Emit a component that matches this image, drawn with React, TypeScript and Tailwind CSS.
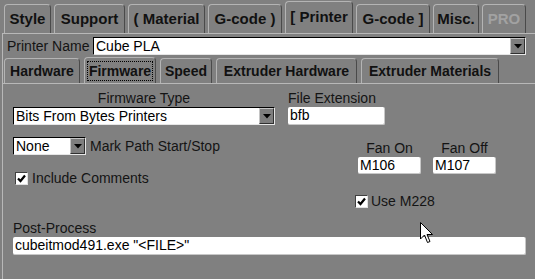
import React from "react";

const topTabs = [
  { label: "Style", w: "w-[47px]" },
  { label: "Support", w: "w-[71px]" },
  { label: "( Material", w: "w-[77px]" },
  { label: "G-code )", w: "w-[74px]" },
  { label: "[ Printer", w: "w-[68px]", active: true },
  { label: "G-code ]", w: "w-[74px]" },
  { label: "Misc.", w: "w-[46px]" },
  { label: "PRO", w: "w-[44px]", disabled: true },
];

const subTabs = [
  { label: "Hardware", w: "w-[76px]" },
  { label: "Firmware", w: "w-[72px]", active: true },
  { label: "Speed", w: "w-[52px]" },
  { label: "Extruder Hardware", w: "w-[141px]" },
  { label: "Extruder Materials", w: "w-[138px]" },
];

function DropButton() {
  return (
    <div className="w-[15px] h-full bg-[#7e7e7e] border border-t-[#c4c4c4] border-l-[#c4c4c4] border-b-[#303030] border-r-[#303030] flex items-center justify-center">
      <svg width="8" height="5" viewBox="0 0 8 5">
        <path d="M0 0 H8 L4 4.5 Z" fill="#000" />
      </svg>
    </div>
  );
}

function Select({ value, className }: { value: string; className: string }) {
  return (
    <div
      className={`flex items-stretch bg-white border border-t-black border-l-black border-b-[#e6e6e6] border-r-[#e6e6e6] ${className}`}
    >
      <span className="flex-1 pl-[2px] leading-[16px] text-[14px] text-black truncate">
        {value}
      </span>
      <DropButton />
    </div>
  );
}

function TextBox({ value, className }: { value: string; className: string }) {
  return (
    <div
      className={`bg-white border-b border-r border-[#c8c8c8] rounded-[2px] pl-[2px] text-[14px] leading-[17px] text-black ${className}`}
    >
      {value}
    </div>
  );
}

function CheckBox() {
  return (
    <div className="w-[13px] h-[13px] bg-white border border-t-[#404040] border-l-[#404040] border-b-[#e0e0e0] border-r-[#e0e0e0] flex items-center justify-center">
      <svg width="9" height="9" viewBox="0 0 9 9">
        <path d="M1 4.5 L3.5 7 L8 1.5" stroke="#000" strokeWidth="2.2" fill="none" />
      </svg>
    </div>
  );
}

export default function App() {
  return (
    <div className="relative w-[535px] h-[279px] bg-[#808080] overflow-hidden font-['Liberation_Sans',Arial,sans-serif] text-[#141414] flex flex-col">
      {/* top tabs */}
      <div className="flex items-end gap-[3px] pl-[4px] h-[33px] shrink-0">
        {topTabs.map((t) => (
          <div
            key={t.label}
            className={`${t.w} ${
              t.active ? "h-[32px]" : "h-[29px]"
            } border border-b-0 border-t-[#b4b4b4] border-l-[#b4b4b4] border-r-[#4a4a4a] rounded-t-[4px] flex items-center justify-center text-[15px] font-bold whitespace-nowrap ${
              t.disabled ? "text-[#a2a2a2]" : "text-[#111]"
            }`}
          >
            {t.label}
          </div>
        ))}
      </div>

      {/* outer panel */}
      <div className="ml-[2px] flex-1 border-t border-l border-[#b8b8b8] flex flex-col">
        <div className="flex items-center h-[18px] mt-[3px]">
          <span className="w-[90px] pl-[4px] text-[14px] leading-[16px]">Printer Name</span>
          <Select value="Cube PLA" className="w-[433px] h-[18px]" />
        </div>

        <div className="flex items-end gap-[4px] pl-[1px] h-[26px] mt-[2px]">
          {subTabs.map((t) => (
            <div
              key={t.label}
              className={`${t.w} ${
                t.active ? "h-[26px]" : "h-[25px]"
              } border border-b-0 border-t-[#b4b4b4] border-l-[#b4b4b4] border-r-[#4a4a4a] rounded-t-[4px] flex items-center justify-center text-[14px] font-bold text-[#111] whitespace-nowrap`}
            >
              {t.active ? (
                <span className="border border-dotted border-black px-[1px] leading-[18px]">
                  {t.label}
                </span>
              ) : (
                t.label
              )}
            </div>
          ))}
        </div>

        {/* firmware content */}
        <div className="flex-1 border-t border-[#b8b8b8] flex flex-col text-[14px] leading-[16px]">
          <div className="flex gap-[13px] pl-[10px] pt-[6px]">
            <div className="w-[262px] flex flex-col">
              <span className="text-center">Firmware Type</span>
              <Select value="Bits From Bytes Printers" className="mt-[1px] h-[18px]" />
            </div>
            <div className="w-[97px] flex flex-col">
              <span>File Extension</span>
              <TextBox value="bfb" className="mt-[1px] h-[18px]" />
            </div>
          </div>

          <div className="flex pl-[10px] mt-[12px]">
            <div className="w-[345px] flex flex-col">
              <div className="flex items-center gap-[4px]">
                <Select value="None" className="w-[73px] h-[18px]" />
                <span>Mark Path Start/Stop</span>
              </div>
              <div className="flex items-center gap-[4px] mt-[15px] pl-[2px]">
                <CheckBox />
                <span>Include Comments</span>
              </div>
            </div>
            <div className="flex flex-col pt-[3px]">
              <div className="flex gap-[12px]">
                <div className="w-[63px] flex flex-col items-center">
                  <span>Fan On</span>
                  <TextBox value="M106" className="mt-[1px] w-full h-[17px]" />
                </div>
                <div className="w-[63px] flex flex-col items-center">
                  <span>Fan Off</span>
                  <TextBox value="M107" className="mt-[1px] w-full h-[17px]" />
                </div>
              </div>
              <div className="flex items-center gap-[3px] mt-[19px] -ml-[3px]">
                <CheckBox />
                <span>Use M228</span>
              </div>
            </div>
          </div>

          <div className="flex flex-col pl-[10px] mt-[11px]">
            <span>Post-Process</span>
            <TextBox value={'cubeitmod491.exe "<FILE>"'} className="mt-[1px] w-[513px] h-[18px]" />
          </div>
        </div>
      </div>

      {/* mouse pointer */}
      <svg
        className="absolute left-[420px] top-[222px]"
        width="13"
        height="22"
        viewBox="0 0 13 22"
      >
        <path
          d="M0.5 0.5 V17 L4.5 13 L7.5 20.5 L10 19.5 L7 12.5 H12.5 Z"
          fill="#fff"
          stroke="#000"
          strokeWidth="1"
        />
      </svg>
    </div>
  );
}
